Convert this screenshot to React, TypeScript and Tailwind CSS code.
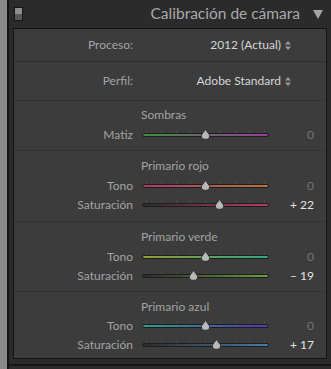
import React from "react";

type Slider = {
  label: string;
  value: number;
  from: string;
  to: string;
};

type Section = {
  title: string;
  sliders: Slider[];
  box: string;
  gap: string;
};

const sections: Section[] = [
  {
    title: "Sombras",
    box: "h-[50px] pt-[6px] border-b border-[#333333]",
    gap: "mt-[2px]",
    sliders: [{ label: "Matiz", value: 0, from: "#3c8f3a", to: "#9a3c9e" }],
  },
  {
    title: "Primario rojo",
    box: "h-[71px] pt-[7px] border-b border-[#333333]",
    gap: "mt-[2px]",
    sliders: [
      { label: "Tono", value: 0, from: "#ad3a6c", to: "#b0763c" },
      { label: "Saturación", value: 22, from: "#2c2c2c", to: "#b83c62" },
    ],
  },
  {
    title: "Primario verde",
    box: "h-[70px] pt-[7px] border-b border-[#333333]",
    gap: "mt-[2px]",
    sliders: [
      { label: "Tono", value: 0, from: "#939e30", to: "#2fa686" },
      { label: "Saturación", value: -19, from: "#2c2c2c", to: "#65a03c" },
    ],
  },
  {
    title: "Primario azul",
    box: "h-[66px] pt-[7px]",
    gap: "mt-[1px]",
    sliders: [
      { label: "Tono", value: 0, from: "#2f9e86", to: "#5634b0" },
      { label: "Saturación", value: 17, from: "#2c2c2c", to: "#4879a8" },
    ],
  },
];

function UpDown() {
  return (
    <svg width="6" height="9" viewBox="0 0 6 9" className="ml-[4px]">
      <path d="M3 0 L6 3.5 L0 3.5 Z" fill="#9a9a9a" />
      <path d="M0 5.5 L6 5.5 L3 9 Z" fill="#9a9a9a" />
    </svg>
  );
}

function Track({ s }: { s: Slider }) {
  const pct = ((s.value + 100) / 200) * 100;
  return (
    <div className="relative h-[19px] w-[127px]">
      {/* tick marks */}
      <div className="absolute left-[4px] right-[4px] top-[5px] flex justify-between">
        {[0, 1, 2, 3, 4, 5, 6, 7, 8].map((i) => (
          <div key={i} className="h-[3px] w-px bg-[#4a4a4a]" />
        ))}
      </div>
      <div
        className="absolute left-0 right-0 top-[8px] h-[4px] rounded-full border border-[#1e1e1e]"
        style={{ background: `linear-gradient(to right, ${s.from}, ${s.to})` }}
      />
      <svg
        width="11"
        height="11"
        viewBox="0 0 11 11"
        className="absolute top-[4px] -ml-[5.5px]"
        style={{ left: `${pct}%` }}
      >
        <path
          d="M5.5 0.5 L9.5 6 Q10.2 10.3 5.5 10.3 Q0.8 10.3 1.5 6 Z"
          fill="#b9b9b9"
          stroke="#2a2a2a"
          strokeWidth="0.8"
        />
      </svg>
    </div>
  );
}

export default function App() {
  return (
    <div className="flex h-[369px] w-[331px] overflow-hidden bg-[#2b2b2b] font-['Lato','Open_Sans',sans-serif]">
      <div className="w-[7px] shrink-0 bg-[#8a8a8a]" />
      <div className="w-[2px] shrink-0 bg-[#141414]" />
      <div className="flex flex-1 flex-col">
        {/* header */}
        <div className="flex h-[28px] shrink-0 items-center pl-[5px] pr-[8px]">
          <div className="flex h-[14px] w-[9px] flex-col overflow-hidden border border-[#161616]">
            <div className="flex-1 bg-[#8e8e8e]" />
            <div className="flex-1 bg-[#585858]" />
          </div>
          <span className="ml-auto mr-[13px] text-[15.5px] leading-none text-[#a9a9a9]">
            Calibración de cámara
          </span>
          <svg width="10" height="9" viewBox="0 0 10 9">
            <path d="M0 0 L10 0 L5 9 Z" fill="#a3a3a3" />
          </svg>
        </div>

        {/* panel */}
        <div className="ml-[4px] mr-[4px] flex shrink-0 flex-col border border-[#141414] bg-[#3c3c3c] text-[12px] text-[#a3a3a3]">
          <div className="flex h-[33px] shrink-0 items-center border-b border-[#2e2e2e]">
            <span className="w-[119px] text-right">Proceso:</span>
            <span className="ml-auto mr-[35px] flex items-center text-[#d6d6d6]">
              2012 (Actual)
              <UpDown />
            </span>
          </div>
          <div className="flex h-[39px] shrink-0 items-center border-b border-[#333333]">
            <span className="w-[119px] text-right">Perfil:</span>
            <span className="ml-auto mr-[35px] flex items-center text-[#d6d6d6]">
              Adobe Standard
              <UpDown />
            </span>
          </div>

          {sections.map((sec) => (
            <div key={sec.title} className={`flex shrink-0 flex-col ${sec.box}`}>
              <div className="h-[16px] pl-[127px] leading-[16px]">{sec.title}</div>
              <div className={`flex flex-col ${sec.gap}`}>
                {sec.sliders.map((s) => (
                  <div key={s.label} className="flex h-[19px] items-center">
                    <span className="w-[119px] text-right">{s.label}</span>
                    <div className="ml-[9px]">
                      <Track s={s} />
                    </div>
                    <span
                      className={`w-[45px] text-right ${s.value === 0 ? "text-[#767676]" : "text-[#e4e4e4]"}`}
                    >
                      {s.value === 0 ? "0" : s.value > 0 ? `+ ${s.value}` : `– ${-s.value}`}
                    </span>
                  </div>
                ))}
              </div>
            </div>
          ))}
        </div>
        <div className="mt-[5px] h-[2px] shrink-0 bg-[#151515]" />
      </div>
    </div>
  );
}
